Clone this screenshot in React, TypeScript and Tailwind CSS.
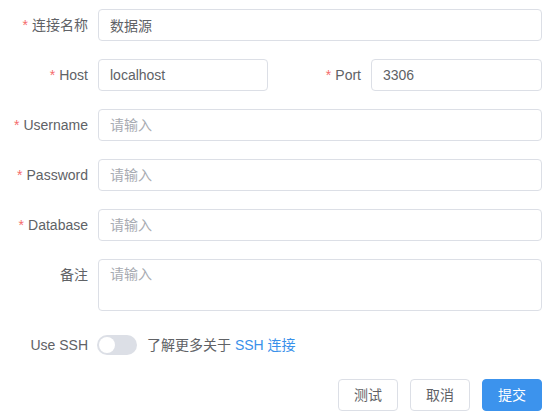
import React from "react";

function Label({ text, req }: { text: string; req?: boolean }) {
  return (
    <div className="w-[98px] shrink-0 pr-[10px] text-right text-[14px] text-[#606266] leading-[32px]">
      {req && <span className="mr-[4px] text-[#f56c6c]">*</span>}
      {text}
    </div>
  );
}

function Input({ value, placeholder }: { value?: string; placeholder?: string }) {
  return (
    <input
      readOnly
      value={value}
      placeholder={placeholder}
      className="flex-1 min-w-0 w-full h-[32px] rounded-[4px] border border-[#dcdfe6] px-[11px] text-[14px] text-[#606266] placeholder:text-[#a8abb2] outline-none"
    />
  );
}

export default function App() {
  return (
    <div
      className="w-[559px] h-[420px] bg-white pt-[9px] pr-[17px]"
      style={{ fontFamily: '"Liberation Sans", "Noto Sans CJK SC", sans-serif' }}
    >
      <div className="flex mb-[18px]">
        <Label text="连接名称" req />
        <Input value="数据源" />
      </div>

      <div className="flex mb-[18px]">
        <div className="flex w-[268px]">
          <Label text="Host" req />
          <Input value="localhost" />
        </div>
        <div className="flex flex-1 min-w-0 ml-[5px]">
          <Label text="Port" req />
          <Input value="3306" />
        </div>
      </div>

      <div className="flex mb-[18px]">
        <Label text="Username" req />
        <Input placeholder="请输入" />
      </div>

      <div className="flex mb-[18px]">
        <Label text="Password" req />
        <Input placeholder="请输入" />
      </div>

      <div className="flex mb-[18px]">
        <Label text="Database" req />
        <Input placeholder="请输入" />
      </div>

      <div className="flex mb-[18px]">
        <Label text="备注" />
        <textarea
          readOnly
          placeholder="请输入"
          className="flex-1 min-w-0 h-[52px] resize-none rounded-[4px] border border-[#dcdfe6] px-[11px] py-[4px] text-[14px] leading-[21px] text-[#606266] placeholder:text-[#a8abb2] outline-none"
        />
      </div>

      <div className="flex items-center h-[32px] mb-[18px]">
        <Label text="Use SSH" />
        <div className="relative w-[40px] h-[20px] rounded-full bg-[#dcdfe6] shrink-0 -ml-[1px]">
          <div className="absolute left-[2px] top-[2px] w-[16px] h-[16px] rounded-full bg-white" />
        </div>
        <span className="ml-[10px] text-[14px] text-[#606266]">
          了解更多关于 <span className="text-[#3a91ea]">SSH 连接</span>
        </span>
      </div>

      <div className="flex justify-end gap-[12px]">
        <button className="h-[32px] w-[60px] rounded-[4px] border border-[#dcdfe6] bg-white text-[14px] text-[#606266]">
          测试
        </button>
        <button className="h-[32px] w-[60px] rounded-[4px] border border-[#dcdfe6] bg-white text-[14px] text-[#606266]">
          取消
        </button>
        <button className="h-[32px] w-[60px] rounded-[4px] border border-[#3c93ed] bg-[#3c93ed] text-[14px] text-white">
          提交
        </button>
      </div>
    </div>
  );
}
